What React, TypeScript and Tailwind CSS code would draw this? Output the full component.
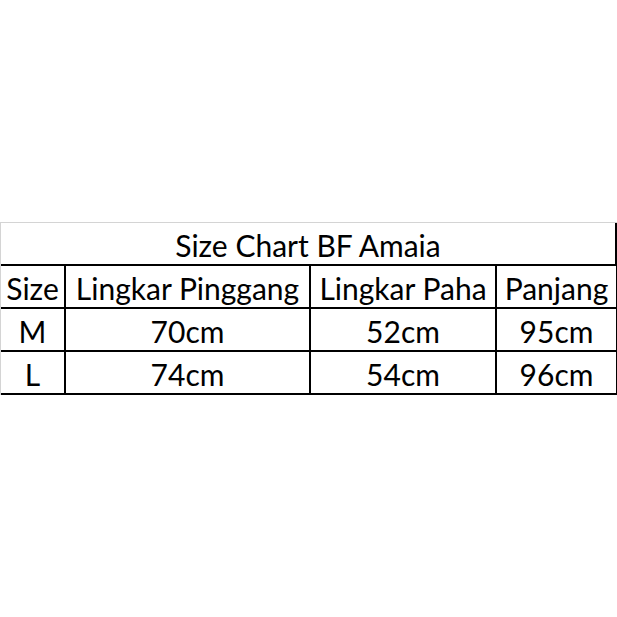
const rows = [
  ['M', '70cm', '52cm', '95cm'],
  ['L', '74cm', '54cm', '96cm'],
];

const headers = ['Size', 'Lingkar Pinggang', 'Lingkar Paha', 'Panjang'];

export default function App() {
  return (
    <div className="h-[617px] w-[617px] bg-white flex items-center font-['Lato','Open_Sans',sans-serif] text-black">
      <div className="w-[617px] border-t border-l border-[#d4d4d4]">
        <div className="h-[43px] flex items-center justify-center pt-[3px] border-b-2 border-r-2 border-black text-[30px] leading-none">
          Size Chart BF Amaia
        </div>
        <div className="grid grid-cols-[65px_245px_186px_121px] text-[30px] leading-none">
          {headers.map((h) => (
            <div
              key={h}
              className="h-[43px] flex items-center justify-center pt-[3px] border-b-2 border-r-2 border-black whitespace-nowrap"
            >
              {h}
            </div>
          ))}
          {rows.map((r) =>
            r.map((c, i) => (
              <div
                key={r[0] + i}
                className="h-[43px] flex items-center justify-center pt-[3px] border-b-2 border-r-2 border-black"
              >
                {c}
              </div>
            ))
          )}
        </div>
      </div>
    </div>
  );
}
